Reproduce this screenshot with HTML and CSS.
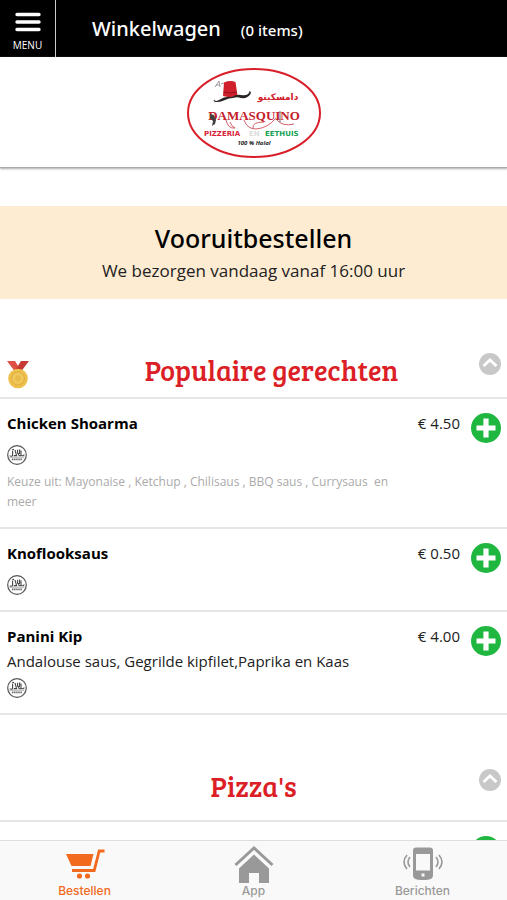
FILE: index.html
```html
<!DOCTYPE html>
<html lang="nl">

<head>
  <meta charset="UTF-8">
  <meta name="viewport" content="width=device-width, initial-scale=1">
  <title>Damasquino</title>
  <link rel="stylesheet" href="styles.css">
</head>

<body>

  <!-- shared icons -->
  <svg class="sprite" aria-hidden="true">
    <symbol id="plus" viewBox="0 0 30 30">
      <circle cx="15" cy="15" r="15" fill="#1fb740"/>
      <path d="M12.400 5.500h5.200v6.900h6.900v5.200h-6.900v6.900h-5.200v-6.900H5.500v-5.200h6.900z" fill="#fff"/>
    </symbol>
    <symbol id="chevron" viewBox="0 0 22 22">
      <circle cx="11" cy="11" r="11" fill="#c8c8c8"/>
      <path d="M4.500 13l6.500-6 6.500 6" fill="none" stroke="#fff" stroke-width="3"/>
    </symbol>
    <symbol id="halal" viewBox="0 0 20 20">
      <circle cx="10" cy="10" r="9.300" fill="none" stroke="#555" stroke-width="1.200"/>
      <path d="M3 10.500c.2 1 2.300 1 2.600-.2V6M5 5l2-.6M8 5l1.600 5.600H6.800M10.600 4.800v3.200c0 1 2 1 2 0V4.500M12 9c-1.200 1.500 1 2 2 1.500V5.500M14.600 10.600c1.500.5 2.600 0 2.300-1.300" fill="none" stroke="#444" stroke-width="1.100"/>
      <path d="M2.500 12.200h15" stroke="#888" stroke-width=".7"/>
      <path d="M5 14.400h10" stroke="#666" stroke-width="1.800" stroke-dasharray="1.500 .6"/>
    </symbol>
  </svg>

  <header class="topbar">
    <button class="menu" type="button">
      <svg width="26" height="20" viewBox="0 0 26 20" aria-hidden="true">
        <path d="M2 2.500h22M2 10h22M2 17.500h22" stroke="#fff" stroke-width="3.400" stroke-linecap="round"/>
      </svg>
      <span>MENU</span>
    </button>
    <a class="cart" href="#cart">Winkelwagen <span class="count">(0 items)</span></a>
  </header>

  <div class="logo">
    <svg width="136" height="92" viewBox="0 0 136 92" role="img" aria-label="Damasquino Pizzeria en Eethuis">
      <ellipse cx="68" cy="46" rx="66" ry="44" fill="#fff" stroke="#d81e28" stroke-width="2"/>
      <!-- fez -->
      <path d="M38 15.500q6-2.500 11.500-.5l2 13.500q-7 3-14.500.5z" fill="#cf202b"/>
      <path d="M37.500 25q7 2 13.500 0" fill="none" stroke="#8e1219" stroke-width="1"/>
      <path d="M29 20l4-6 1 6M30 18h4M35 17l3-1" fill="none" stroke="#888" stroke-width=".8"/>
      <!-- moustache -->
      <path d="M28 32.500q1 2.500 5 .5 6-4 13-3 4-3 9-2 6 1 8-2 1-2-1-2 4 0 2.500 3-3 5-9.500 4-4-1.500-8 0-4 0-8 2-5 2.500-9 2-3-.5-2-2.500z" fill="#292424"/>
      <text x="92" y="33" class="logo-arabic" text-anchor="middle">دامسكينو</text>
      <text x="68" y="53" class="logo-name" text-anchor="middle">DAMASQUINO</text>
      <path d="M40 53q2 9 9 8-4-2-5-6M58 53q3 9 12 9 12-1 20-11M78 55q-12 0-11 6M90 52q6 8 18 5" fill="none" stroke="#c83942" stroke-width=".8"/>
      <path d="M94 44v11" stroke="#454040" stroke-width=".8"/>
      <path d="M24 47l4 1 2 5-1 4-3 2 1-5-3-3z" fill="#454040"/>
      <g class="logo-line">
        <text x="18" y="69" fill="#d81e38">pizzeria</text>
        <text x="63" y="69" fill="#ddd">en</text>
        <text x="79" y="69" fill="#16a255">eethuis</text>
      </g>
      <text x="68" y="78" class="logo-halal" text-anchor="middle">100 % Halal</text>
    </svg>
  </div>

  <main class="content">
    <section class="notice">
      <h1>Vooruitbestellen</h1>
      <p>We bezorgen vandaag vanaf 16:00 uur</p>
    </section>

    <section>
      <div class="category popular">
        <svg class="medal" width="24" height="28" viewBox="0 0 24 28" aria-hidden="true">
          <path d="M1 0h8l5 8-4 4z" fill="#df5146"/>
          <path d="M23 0h-8l-5 8 4 4z" fill="#c63b34"/>
          <circle cx="12" cy="17.500" r="9.800" fill="#efc04b"/>
          <circle cx="12" cy="17.500" r="6.500" fill="#f0c75a" stroke="#dfb044" stroke-width="1.200"/>
          <circle cx="12" cy="17.500" r="3" fill="#e8bb4a"/>
        </svg>
        <h2>Populaire gerechten</h2>
        <button class="toggle" type="button" aria-label="Inklappen"><svg width="22" height="22"><use href="#chevron"/></svg></button>
      </div>

      <ul class="dishes">
        <li class="dish">
          <div class="info">
            <h3>Chicken Shoarma</h3>
            <svg class="halal" width="20" height="20"><use href="#halal"/></svg>
            <p class="options">Keuze uit: Mayonaise , Ketchup , Chilisaus , BBQ saus , Currysaus &nbsp;en meer</p>
          </div>
          <span class="price">€ 4.50</span>
          <button class="add" type="button" aria-label="Toevoegen"><svg width="30" height="30"><use href="#plus"/></svg></button>
        </li>
        <li class="dish">
          <div class="info">
            <h3>Knoflooksaus</h3>
            <svg class="halal" width="20" height="20"><use href="#halal"/></svg>
          </div>
          <span class="price">€ 0.50</span>
          <button class="add" type="button" aria-label="Toevoegen"><svg width="30" height="30"><use href="#plus"/></svg></button>
        </li>
        <li class="dish">
          <div class="info">
            <h3>Panini Kip</h3>
            <p>Andalouse saus, Gegrilde kipfilet,Paprika en Kaas</p>
            <svg class="halal" width="20" height="20"><use href="#halal"/></svg>
          </div>
          <span class="price">€ 4.00</span>
          <button class="add" type="button" aria-label="Toevoegen"><svg width="30" height="30"><use href="#plus"/></svg></button>
        </li>
      </ul>
    </section>

    <section>
      <div class="category">
        <h2>Pizza's</h2>
        <button class="toggle" type="button" aria-label="Inklappen"><svg width="22" height="22"><use href="#chevron"/></svg></button>
      </div>
      <ul class="dishes">
        <li class="dish">
          <div class="info"></div>
          <button class="add" type="button" aria-label="Toevoegen"><svg width="30" height="30"><use href="#plus"/></svg></button>
        </li>
      </ul>
    </section>
  </main>

  <nav class="tabs">
    <a class="tab active" href="#bestellen">
      <svg width="40" height="38" viewBox="0 0 40 38" aria-hidden="true">
        <path d="M1 9h27.500l-3 12H6.500z" fill="currentColor"/>
        <path d="M39.500 6h-5.300l-5 19.500H7" fill="none" stroke="currentColor" stroke-width="2.800"/>
        <circle cx="14.500" cy="31" r="2.600" fill="currentColor"/>
        <circle cx="22.500" cy="31" r="2.600" fill="currentColor"/>
      </svg>
      <span>Bestellen</span>
    </a>
    <a class="tab" href="#app">
      <svg width="40" height="38" viewBox="0 0 40 38" aria-hidden="true">
        <path d="M1.500 20L20 3l18.500 17" fill="none" stroke="currentColor" stroke-width="3"/>
        <path d="M20 9.500l15 14V38H25V28H15v10H5V23.500z" fill="currentColor"/>
      </svg>
      <span>App</span>
    </a>
    <a class="tab" href="#berichten">
      <svg width="40" height="38" viewBox="0 0 40 38" aria-hidden="true">
        <path d="M13 2.500h14q3 0 3 3v25q0 3-4 4-6 1-12 0-4-1-4-4v-25q0-3 3-3zM13 9v16.500h14V9zM18.500 28.500v3h3v-3z" fill="currentColor" fill-rule="evenodd"/>
        <path d="M7 12q-4 5 0 10M4 10q-6 7 0 14M33 12q4 5 0 10M36 10q6 7 0 14" fill="none" stroke="currentColor" stroke-width="1.600"/>
      </svg>
      <span>Berichten</span>
    </a>
  </nav>

</body>
</html>
```

FILE: styles.css
```css
* { box-sizing: border-box; }
body { margin: 0; height: 100vh; display: flex; flex-direction: column; font-family: "Open Sans", "Noto Sans", sans-serif; font-size: 15px; line-height: 20px; color: #222; background: #fff; }
h1, h2, h3, p, ul { margin: 0; padding: 0; }
button { margin: 0; padding: 0; border: 0; background: none; color: inherit; font: inherit; cursor: pointer; }
a { color: inherit; text-decoration: none; }
svg { display: block; }
.sprite { position: absolute; width: 0; height: 0; }

.topbar { display: flex; flex: none; height: 57px; background: #000; color: #fff; }
.menu { display: flex; flex-direction: column; align-items: center; gap: 7px; width: 56px; padding-top: 12px; border-right: 1px solid #ccc; font-size: 10px; line-height: 12px; }
.cart { display: flex; align-items: baseline; gap: 20px; padding: 15px 36px; font-family: "Noto Sans", "Open Sans", sans-serif; font-size: 20px; line-height: 28px; font-weight: 500; }
.count { font-size: 15px; }

.logo { display: flex; flex: none; justify-content: center; padding: 10px 0 8px; border-bottom: 1px solid #aaa; box-shadow: 0 1px 2px #aaa; }
.logo-arabic { font: bold 9px "DejaVu Sans", sans-serif; fill: #cf202b; }
.logo-name { font: bold 13px "Liberation Serif", serif; fill: #c3202a; }
.logo-line { font: bold 10px "DejaVu Sans", sans-serif; font-variant: small-caps; }
.logo-halal { font: italic bold 6px "Open Sans", sans-serif; fill: #222; }

.content { flex: 1; min-height: 0; overflow: hidden; padding-top: 38px; }
.notice { padding: 16px 8px; background: #feecd2; text-align: center; }
.notice h1 { font-family: "Noto Sans", "Open Sans", sans-serif; font-size: 25px; line-height: 32px; font-weight: 500; color: #000; }
.notice p { margin-top: 4px; font-size: 17px; line-height: 25px; }

.category { display: grid; grid-template-columns: auto 1fr auto; align-items: start; padding: 54px 6px 17px; border-bottom: 2px solid #e6e6e6; }
.category h2 { grid-column: 2 / 4; grid-row: 1; text-align: center; font-family: "Bree Serif", "DejaVu Serif", serif; font-size: 28px; line-height: 34px; font-weight: 400; color: #dc1f26; }
.toggle { grid-column: 3; grid-row: 1; }
.popular { padding-bottom: 8px; }
.medal { margin-top: 8px; margin-right: 12px; }

.dishes { list-style: none; }
.dish { display: flex; align-items: flex-start; padding: 14px 6px 15px 7px; border-bottom: 2px solid #e6e6e6; }
.info { display: flex; flex: 1; flex-direction: column; }
.info h3 { margin-bottom: 5px; font-size: 15px; line-height: 20px; color: #000; }
.halal { margin-top: 7px; }
.info .options { margin-top: 7px; font-size: 12px; color: #aaa; }
.price { width: 53px; margin-right: 11px; text-align: right; white-space: nowrap; }

.tabs { display: flex; flex: none; border-top: 1px solid #ddd; background: #f9f9f9; }
.tab { display: flex; flex: 1; flex-direction: column; align-items: center; padding: 4px 0 1px; font-family: Inter, "Liberation Sans", sans-serif; font-size: 12px; line-height: 16px; font-weight: 500; color: #999; }
.tab.active { color: #f16a1d; }
```
